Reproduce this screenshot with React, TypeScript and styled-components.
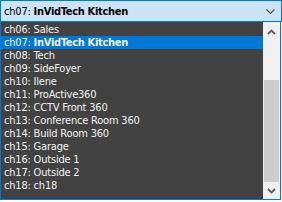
import React from "react";
import styled, { createGlobalStyle } from "styled-components";

const GlobalStyle = createGlobalStyle`
  html, body {
    margin: 0;
    padding: 0;
    background: #ffffff;
  }
  body {
    font-family: "DejaVu Sans Condensed", "Liberation Sans", Arial, sans-serif;
    font-size: 11px;
    letter-spacing: -0.2px;
  }
`;

const channels = [
  "ch06: Sales",
  "ch07: InVidTech Kitchen",
  "ch08: Tech",
  "ch09: SideFoyer",
  "ch10: Ilene",
  "ch11: ProActive360",
  "ch12: CCTV Front 360",
  "ch13: Conference Room 360",
  "ch14: Build Room 360",
  "ch15: Garage",
  "ch16: Outside 1",
  "ch17: Outside 2",
  "ch18: ch18",
];

const selectedIndex = 1;

const Wrapper = styled.div`
  width: 282px;
  display: flex;
  flex-direction: column;
`;

const Combo = styled.div`
  box-sizing: border-box;
  width: 282px;
  height: 22px;
  border: 1px solid #0078d7;
  background: #cce4f7;
  display: flex;
  align-items: center;
  justify-content: space-between;
  padding: 0 6px 0 3px;
  color: #000000;
`;

const ComboText = styled.span`
  white-space: nowrap;
`;

const Bold = styled.span`
  font-weight: bold;
  letter-spacing: -0.3px;
`;

const Chevron = styled.svg`
  width: 9px;
  height: 5px;
`;

const Dropdown = styled.div`
  box-sizing: border-box;
  width: 281px;
  height: 178px;
  border: 1px solid #0078d7;
  border-top: none;
  background: #424242;
  display: flex;
`;

const List = styled.ul`
  flex: 1;
  list-style: none;
  margin: 0;
  padding: 1px 0 0;
  display: flex;
  flex-direction: column;
`;

const Row = styled.li<{ $selected: boolean }>`
  height: 13px;
  line-height: 13px;
  padding-left: 3px;
  white-space: nowrap;
  color: #f2f2f2;
  background: ${(p) => (p.$selected ? "#0078d7" : "transparent")};
`;

const Scrollbar = styled.div`
  width: 17px;
  background: #f0f0f0;
  display: flex;
  flex-direction: column;
  padding-top: 1px;
`;

const ArrowButton = styled.div`
  height: 17px;
  display: flex;
  align-items: center;
  justify-content: center;
`;

const Track = styled.div`
  flex: 1;
  display: flex;
  flex-direction: column;
  padding-top: 40px;
`;

const Thumb = styled.div`
  flex: 1;
  margin: 0 1px;
  background: #cdcdcd;
`;

const Arrow = ({ up }: { up?: boolean }) => (
  <svg width="9" height="6" viewBox="0 0 9 6">
    <path
      d={up ? "M1 5 L4.5 1.5 L8 5" : "M1 1 L4.5 4.5 L8 1"}
      fill="none"
      stroke="#606060"
      strokeWidth="1.8"
    />
  </svg>
);

const App = () => {
  return (
    <>
      <GlobalStyle />
      <Wrapper>
        <Combo>
          <ComboText>
            ch07: <Bold>InVidTech Kitchen</Bold>
          </ComboText>
          <Chevron viewBox="0 0 9 5">
            <path d="M0.5 0.5 L4.5 4.5 L8.5 0.5" fill="none" stroke="#505050" strokeWidth="1.1" />
          </Chevron>
        </Combo>
        <Dropdown>
          <List>
            {channels.map((c, i) => (
              <Row key={c} $selected={i === selectedIndex}>
                {i === selectedIndex ? (
                  <>
                    {c.slice(0, 6)}
                    <Bold>{c.slice(6)}</Bold>
                  </>
                ) : (
                  c
                )}
              </Row>
            ))}
          </List>
          <Scrollbar>
            <ArrowButton>
              <Arrow up />
            </ArrowButton>
            <Track>
              <Thumb />
            </Track>
            <ArrowButton>
              <Arrow />
            </ArrowButton>
          </Scrollbar>
        </Dropdown>
      </Wrapper>
    </>
  );
};

export default App;
